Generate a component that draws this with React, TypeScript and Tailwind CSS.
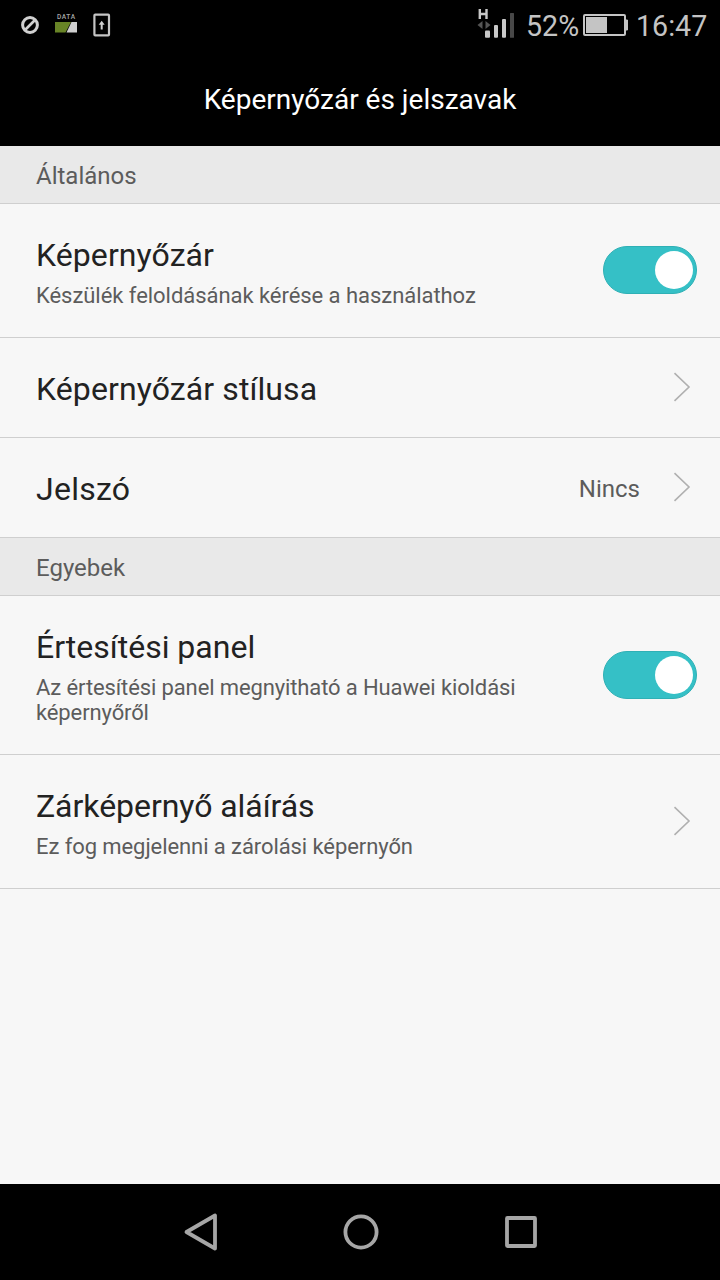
import type { ReactNode } from 'react';

function StatusBar() {
  return (
    <div className="flex h-[51px] items-start justify-between bg-black">
      <svg width="130" height="51" viewBox="0 0 130 51" fill="none">
        <circle cx="30" cy="25" r="7.4" stroke="#d0d0d0" strokeWidth="3" />
        <path d="M25.5 29.5L34.5 20.5" stroke="#d0d0d0" strokeWidth="2.6" />
        <text x="57" y="18.6" fontSize="6.6" fontWeight="500" fill="#a8a8a8" fontFamily="Roboto, sans-serif" textLength="18">DATA</text>
        <path d="M55 22H71L65.5 32.5H55Z" fill="#688426" />
        <path d="M71.5 22H77V32.5H66.5Z" fill="#cfcfcf" />
        <rect x="94.4" y="14.7" width="14.6" height="20.6" rx="0.8" stroke="#c4c4c4" strokeWidth="2.2" />
        <path d="M101.7 29.5V24" stroke="#d0d0d0" strokeWidth="2" />
        <path d="M98.7 24.8L101.7 20.8L104.7 24.8Z" fill="#d0d0d0" />
      </svg>
      <div className="flex h-[51px] items-start text-[28.6px] leading-[34px] text-[#c4c4c4]">
        <svg width="50" height="51" viewBox="470 0 50 51" fill="none">
          <path d="M479.8 9V19M486.5 9V19M479.8 14H486.5" stroke="#c8c8c8" strokeWidth="2.4" />
          <path d="M477.5 25L482.5 21V29ZM490.5 25L485.5 21V29Z" fill="#555" />
          <rect x="485" y="30.5" width="5" height="7.2" rx="1" fill="#c8c8c8" />
          <rect x="494" y="25" width="4" height="12.7" rx="1" fill="#c8c8c8" />
          <rect x="502" y="19" width="4" height="18.7" rx="1" fill="#c8c8c8" />
          <rect x="510" y="13" width="4" height="24.7" rx="0.5" fill="#484848" />
        </svg>
        <span className="w-[62px] pl-1.5 pt-[9px]">52%</span>
        <svg width="47" height="51" viewBox="582 0 47 51" fill="none">
          <rect x="584" y="15" width="41" height="20" rx="1" stroke="#c4c4c4" strokeWidth="2" />
          <rect x="586" y="17" width="21" height="16" fill="#c4c4c4" />
          <path d="M626 20H627.5V30H626Z" stroke="#c4c4c4" strokeWidth="1" fill="#c4c4c4" />
        </svg>
        <span className="w-[91px] pl-[7px] pt-[9px]">16:47</span>
      </div>
    </div>
  );
}

function SectionHeader({ children }: { children: ReactNode }) {
  return (
    <h2 className="h-[58px] border-b border-[#cfcfcf] bg-[#e9e9e9] pl-9 pt-4 text-[24px] leading-[28px] text-[#5c5c5c]">
      {children}
    </h2>
  );
}

function Toggle() {
  return (
    <button
      role="switch"
      aria-checked="true"
      className="mr-[23px] flex h-12 w-[94px] items-center justify-end rounded-full border border-[#2fb0b5] bg-[#35c0c6] pr-[3px]"
    >
      <span className="size-[38px] rounded-full bg-white" />
    </button>
  );
}

function Chevron() {
  return (
    <svg className="mr-[28px]" width="20" height="32" viewBox="0 0 20 32" fill="none">
      <path d="M2.5 2.2L17 16L2.5 29.8" stroke="#b0b0b0" strokeWidth="1.6" />
    </svg>
  );
}

type RowProps = {
  title: string;
  titleClass?: string;
  summary?: string;
  summaryClass?: string;
  value?: string;
  height: string;
  control: ReactNode;
};

function Row({ title, titleClass = '', summary, summaryClass = '', value, height, control }: RowProps) {
  return (
    <div className={`flex border-b border-[#cfcfcf] ${height}`}>
      <div className="flex-1 pl-9 pt-8">
        <div className={`text-[32px] leading-[38px] text-[#222] ${titleClass}`}>{title}</div>
        {summary && (
          <div className={`mt-[9px] w-[500px] text-[22px] leading-[25px] text-[#5c5c5c] ${summaryClass}`}>{summary}</div>
        )}
      </div>
      <div className="flex items-center pb-px">
        {value && <span className="mr-8 pt-[3px] text-[24px] leading-[28px] text-[#5c5c5c]">{value}</span>}
        {control}
      </div>
    </div>
  );
}

function NavBar() {
  return (
    <nav className="flex h-24 justify-center bg-black">
      <svg width="720" height="96" viewBox="0 0 720 96" fill="none" stroke="#a6a6a6" strokeWidth="3.8" strokeLinejoin="round">
        <path d="M186.5 48L215 31.5V64.5Z" />
        <circle cx="361" cy="48" r="15.6" />
        <rect x="507" y="34" width="28" height="28" rx="0.5" />
      </svg>
    </nav>
  );
}

export default function App() {
  return (
    <div className="flex h-[1280px] w-[720px] flex-col bg-[#f7f7f7] font-[Roboto,sans-serif]">
      <StatusBar />
      <h1 className="h-[95px] bg-black pt-8 text-center text-[28px] leading-[33px] text-white">
        Képernyőzár és jelszavak
      </h1>
      <main className="flex-1">
        <SectionHeader>Általános</SectionHeader>
        <Row
          height="h-[134px]"
          title="Képernyőzár"
          titleClass="tracking-[0.08px]"
          summary="Készülék feloldásának kérése a használathoz"
          summaryClass="tracking-[-0.045px]"
          control={<Toggle />}
        />
        <Row height="h-[100px]" title="Képernyőzár stílusa" titleClass="tracking-[0.1px]" control={<Chevron />} />
        <Row height="h-[100px]" title="Jelszó" titleClass="tracking-[0.25px]" value="Nincs" control={<Chevron />} />
        <SectionHeader>Egyebek</SectionHeader>
        <Row
          height="h-[159px]"
          title="Értesítési panel"
          summary="Az értesítési panel megnyitható a Huawei kioldási képernyőről"
          summaryClass="tracking-[-0.12px]"
          control={<Toggle />}
        />
        <Row
          height="h-[134px]"
          title="Zárképernyő aláírás"
          titleClass="tracking-[-0.05px]"
          summary="Ez fog megjelenni a zárolási képernyőn"
          summaryClass="tracking-[-0.08px]"
          control={<Chevron />}
        />
      </main>
      <NavBar />
    </div>
  );
}
